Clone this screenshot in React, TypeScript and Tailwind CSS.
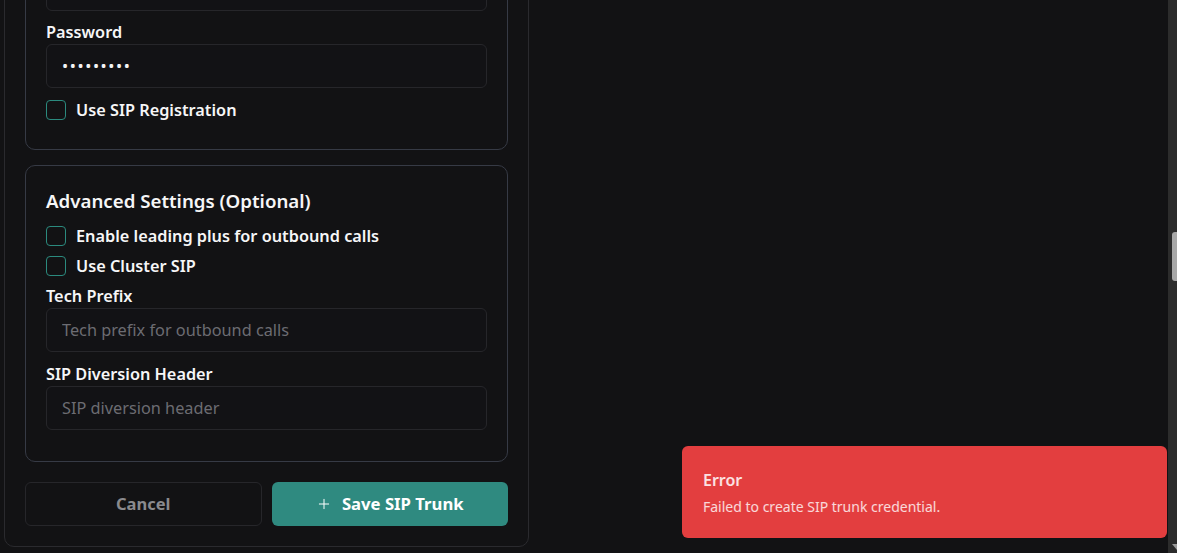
import { Plus } from "lucide-react";

const Check = ({ label }: { label: string }) => (
  <label className="flex h-6 items-center gap-2.5">
    <span className="h-5 w-5 rounded-[4px] border border-[#2b8a7e]" />
    <span className="text-[16.3px] font-semibold text-[#f6f6f7]">{label}</span>
  </label>
);

const Field = ({
  label,
  placeholder,
  password,
  className = "",
}: {
  label: string;
  placeholder?: string;
  password?: boolean;
  className?: string;
}) => (
  <div className={"flex flex-col " + className}>
    <span className="h-6 text-[16.3px] font-semibold leading-6 text-[#f6f6f7]">{label}</span>
    <input
      type="text"
      defaultValue={password ? "•••••••••" : undefined}
      placeholder={placeholder}
      readOnly
      className={
        "h-11 w-full rounded-md border border-[#26262a] bg-[#121215] px-[15px] text-[16.3px] text-[#f4f4f5] outline-none placeholder:text-[#6c6c72] " +
        (password ? "tracking-[1.6px]" : "")
      }
    />
  </div>
);

export default function App() {
  return (
    <div className="relative flex h-[553px] w-full overflow-hidden bg-[#121214] font-['Noto_Sans',sans-serif]">
      <div className="flex flex-1 flex-col justify-end overflow-hidden pb-[6px] pl-1">
        <div className="flex w-[525px] flex-col rounded-[10px] border border-[#2a2a2e] p-5">
          <div className="flex flex-col rounded-[10px] border border-[#363a45] px-5 pb-[27px] pt-5">
            <Field label="SIP Trunk Name" placeholder="My SIP trunk" />
            <Field label="Server Address" placeholder="sip.example.com" className="mt-2" />
            <Field label="Username" placeholder="Username" className="mt-2" />
            <Field label="Password" password className="mt-[9px]" />
            <div className="mt-[10px]">
              <Check label="Use SIP Registration" />
            </div>
          </div>

          <div className="mt-[15px] flex flex-col rounded-[10px] border border-[#363a45] px-5 pb-[31px] pt-[21px]">
            <h3 className="h-7 text-[18.7px] font-semibold leading-7 text-[#f6f6f7]">
              Advanced Settings (Optional)
            </h3>
            <div className="mt-[9px] flex flex-col gap-1.5">
              <Check label="Enable leading plus for outbound calls" />
              <Check label="Use Cluster SIP" />
            </div>
            <Field label="Tech Prefix" placeholder="Tech prefix for outbound calls" className="mt-1.5" />
            <Field label="SIP Diversion Header" placeholder="SIP diversion header" className="mt-2.5" />
          </div>

          <div className="mt-5 grid grid-cols-2 gap-2.5">
            <button className="h-11 rounded-md border border-[#26262a] text-[16.5px] font-bold text-[#8a8a8e]">
              Cancel
            </button>
            <button className="flex h-11 items-center justify-center gap-2.5 rounded-md bg-[#2f8a80] text-[16.7px] font-bold text-white">
              <Plus size={16} strokeWidth={1.5} />
              Save SIP Trunk
            </button>
          </div>
        </div>
      </div>

      <div className="flex w-[9px] flex-col bg-[#2c2c2c]">
        <div className="ml-1 mt-[232px] h-[49px] w-[5px] rounded-l-[3px] bg-[#a8a8a8]" />
        <svg className="mb-[3px] ml-1 mt-auto" width="5" height="6" viewBox="0 0 5 6">
          <path d="M0 0 L5 0 L5 6 Z" fill="#9a9a9a" />
        </svg>
      </div>

      <div className="absolute bottom-[15px] right-[10px] flex h-[92px] w-[485px] flex-col justify-center rounded-md bg-[#e33e3f] px-[21px]">
        <div className="text-base font-semibold leading-6 text-white/85">Error</div>
        <div className="mt-[5px] text-sm leading-5 text-white/80">Failed to create SIP trunk credential.</div>
      </div>
    </div>
  );
}
